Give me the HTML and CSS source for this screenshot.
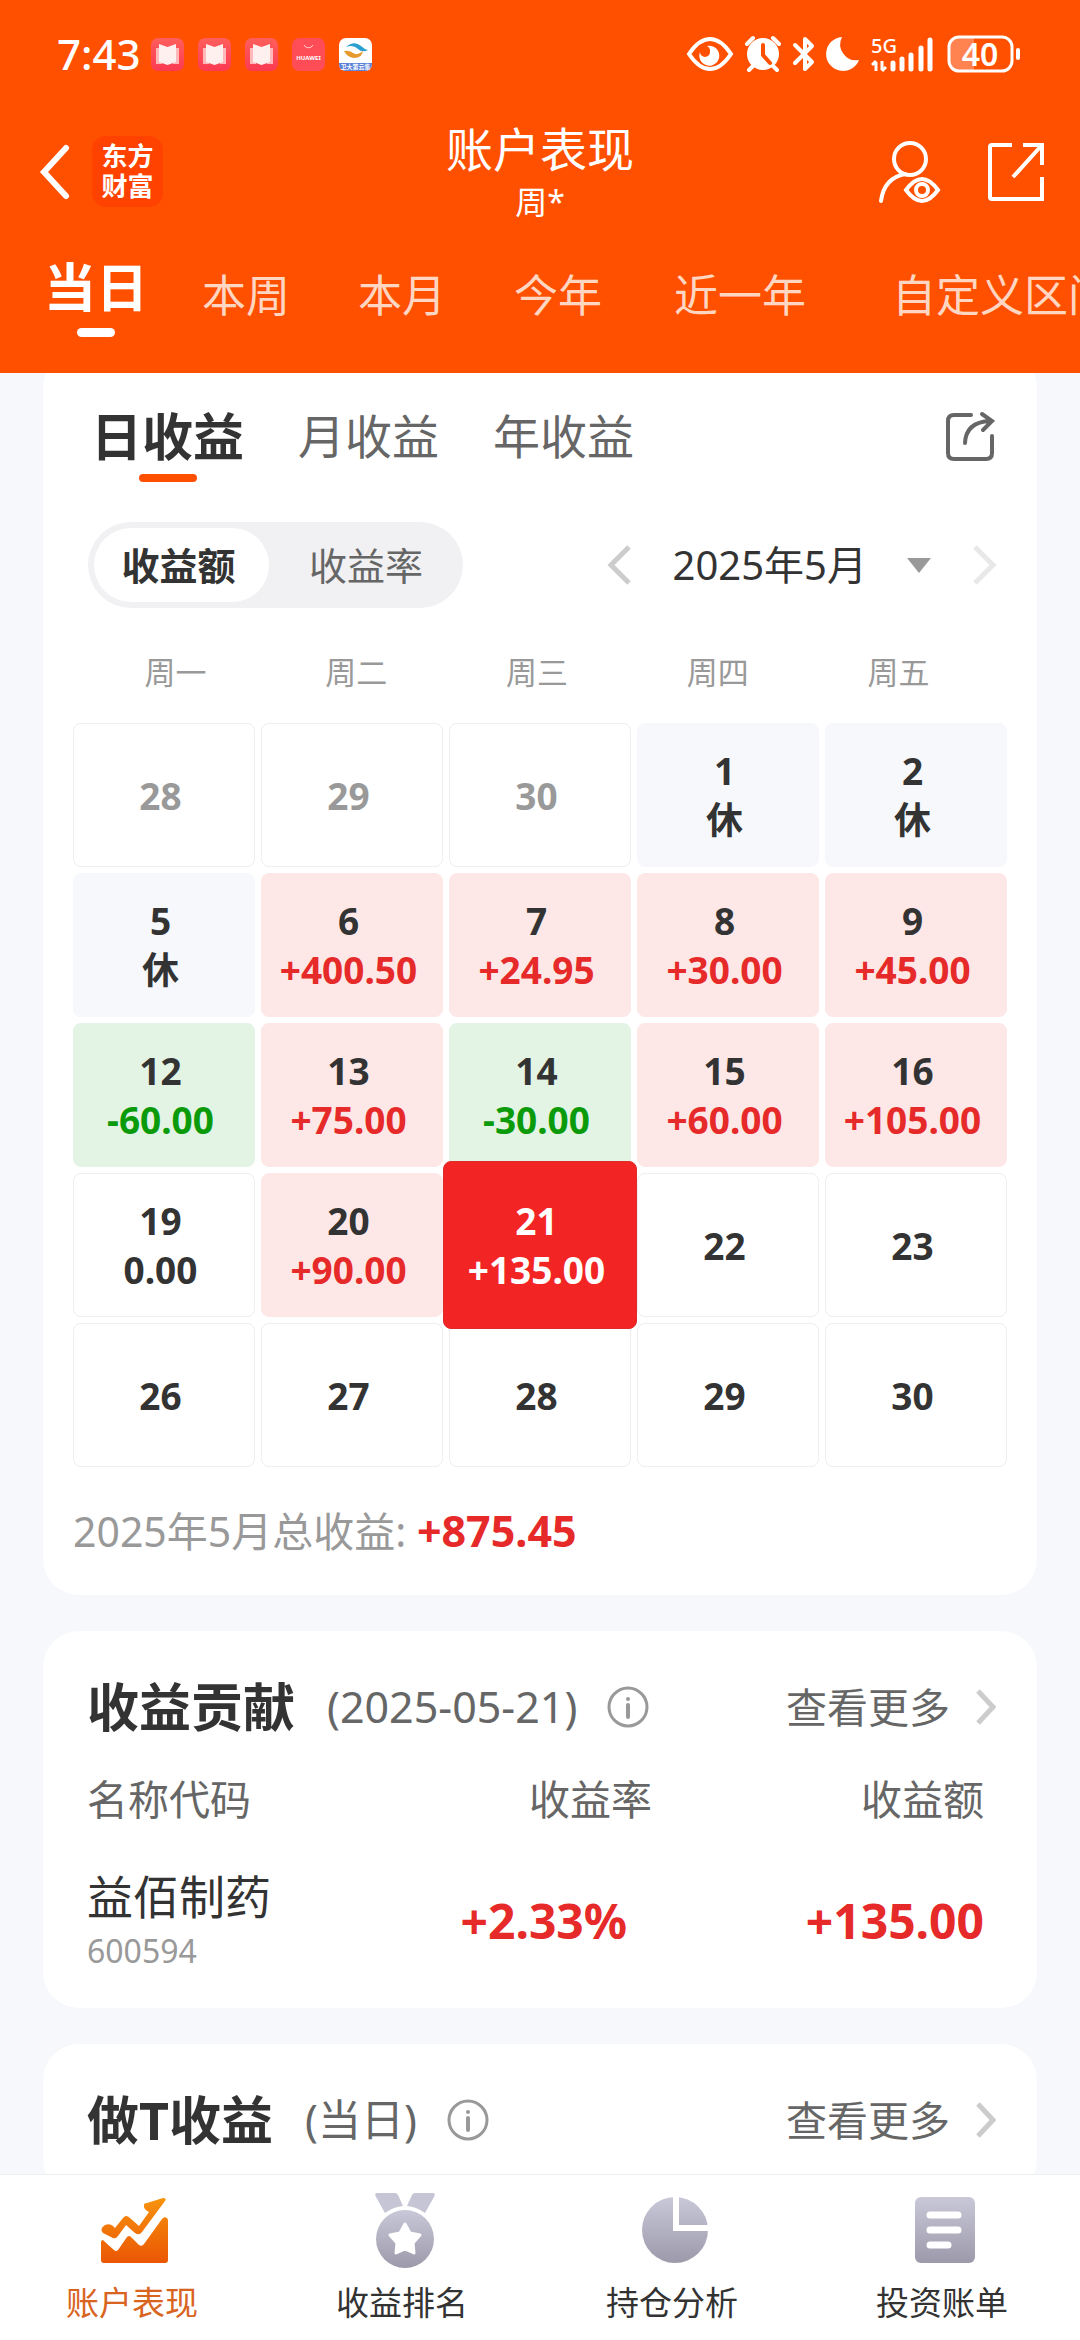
FILE: index.html
```html
<!DOCTYPE html>
<html lang="zh-CN">
<head>
<meta charset="utf-8">
<meta name="viewport" content="width=device-width, initial-scale=1">
<title>账户表现</title>
<link rel="stylesheet" href="styles.css">
</head>
<body>
<svg class="defs" aria-hidden="true">
  <defs>
    <linearGradient id="grey" x1="0" y1="0" x2="0" y2="1"><stop offset="0" stop-color="#c9c8d8"/><stop offset="1" stop-color="#9c9aaa"/></linearGradient>
    <linearGradient id="hot" gradientUnits="userSpaceOnUse" x1="0" y1="0" x2="0" y2="66"><stop offset="0" stop-color="#f8930c"/><stop offset="1" stop-color="#ea5504"/></linearGradient>
    <linearGradient id="pink" x1="0" y1="0" x2="0" y2="1"><stop offset="0" stop-color="#ff5f5c"/><stop offset="1" stop-color="#fb3a52"/></linearGradient>
    <symbol id="book" viewBox="0 0 33 33">
      <rect width="33" height="33" rx="7" fill="url(#pink)"/>
      <path d="M5 10h6v16H5zM22 10h6v16h-6z" fill="#ffb9bb"/>
      <path d="M8 6l8.500 3v18L8 24zM25 6l-8.500 3v18l8.500-3z" fill="#fff0f0"/>
    </symbol>
    <symbol id="info" viewBox="0 0 42 42">
      <circle cx="21" cy="21" r="19" fill="none" stroke="#999" stroke-width="3"/>
      <circle cx="21" cy="13" r="2" fill="#999"/>
      <path d="M21 19v12" stroke="#999" stroke-width="4" stroke-linecap="round"/>
    </symbol>
    <symbol id="more" viewBox="0 0 20 36"><path d="M2 2l15 16L2 34" fill="none" stroke="#ccc" stroke-width="5"/></symbol>
  </defs>
</svg>

<div class="app">
  <header class="top">
    <div class="status">
      <span class="clock">7:43</span>
      <div class="notices">
        <svg width="33" height="33"><use href="#book"/></svg>
        <svg width="33" height="33"><use href="#book"/></svg>
        <svg width="33" height="33"><use href="#book"/></svg>
        <svg width="33" height="33" viewBox="0 0 33 33">
          <rect width="33" height="33" rx="7" fill="#ff4d57"/>
          <path d="M12 7a5 5 0 0 0 9 0" fill="none" stroke="#ffd0d0" stroke-width="1"/>
          <text class="brand" x="16.500" y="22">HUAWEI</text>
        </svg>
        <svg width="33" height="33" viewBox="0 0 33 33">
          <rect width="33" height="33" rx="7" fill="#fff"/>
          <path d="M0 25h33v1a7 7 0 0 1-7 7H7a7 7 0 0 1-7-7z" fill="#5b82d8"/>
          <path d="M7 9q8-7 15-1 3 3 7 4-6 3-10-1-5-5-12-2z" fill="#2a9fd0"/>
          <path d="M5 13q5-1 9 2 5 3 10-2-1 7-9 7-7-1-10-7z" fill="#e59a2b"/>
          <text class="brand" x="16.500" y="31">卫大第云集</text>
        </svg>
      </div>
      <div class="signals">
        <svg width="46" height="34" viewBox="0 0 46 34"><path d="M2 17Q12 2 23 2t21 15Q34 32 23 32T2 17z" fill="none" stroke="#fff" stroke-width="4"/><path d="M20 9a10 10 0 1 1-7 6a5 5 0 0 0 10 0a6 6 0 0 0-3-6z" fill="#fff"/></svg>
        <svg width="36" height="36" viewBox="0 0 36 36"><circle cx="18" cy="18" r="16" fill="#fff"/><path d="M2 8l6-6M34 8l-6-6M4 34l4-4M32 34l-4-4" stroke="#fff" stroke-width="4" stroke-linecap="round"/><path d="M18 9v10l7 8" fill="none" stroke="#ff5000" stroke-width="4" stroke-linecap="round"/></svg>
        <svg width="22" height="36" viewBox="0 0 22 36"><path d="M2 9l17 17-7 7V3l7 7L2 27" fill="none" stroke="#fff" stroke-width="4" stroke-linejoin="round" stroke-linecap="round"/></svg>
        <svg width="32" height="36" viewBox="0 0 32 36"><path d="M15 1A17 17 0 1 0 32 24A16 16 0 0 1 15 1z" fill="#fff"/></svg>
        <svg width="64" height="36" viewBox="0 0 64 36">
          <text class="net" x="0" y="17">5G</text>
          <path d="M5 35V26M1 29l4-4M11 25v9M15 31l-4 4" stroke="#fff" stroke-width="3"/>
          <path d="M22 27v6M31 23v10M40 19v14M50 12v21M59 4v29" stroke="#fff" stroke-width="5" stroke-linecap="round"/>
        </svg>
        <svg width="74" height="38" viewBox="0 0 74 38">
          <path d="M11 2h16v34H11a9 9 0 0 1-9-9V11a9 9 0 0 1 9-9z" fill="#ff8350"/>
          <rect x="2" y="2" width="63" height="34" rx="10" fill="none" stroke="#fff" stroke-width="3"/>
          <path d="M71 15v8" stroke="#fff" stroke-width="4" stroke-linecap="round"/>
          <text class="charge" x="33" y="31">40</text>
        </svg>
      </div>
    </div>

    <div class="titlebar">
      <div class="left">
        <button class="plain" aria-label="返回"><svg width="35" height="54" viewBox="-5 0 35 54"><path d="M26 3L4 27l22 24" fill="none" stroke="#fff" stroke-width="6" stroke-linecap="round"/></svg></button>
        <span class="logo">东方<br>财富</span>
      </div>
      <div class="heading">
        <h1>账户表现</h1>
        <p>周*</p>
      </div>
      <div class="right">
        <button class="plain" aria-label="账户"><svg width="64" height="64" viewBox="0 0 64 64" fill="none" stroke="#fff" stroke-width="4"><circle cx="32" cy="19" r="16"/><path d="M3 61Q6 38 27 34" stroke-linecap="round"/><path d="M28 50q8-11 16-11t16 11q-8 11-16 11T28 50z"/><circle cx="44" cy="50" r="6"/></svg></button>
        <button class="plain" aria-label="分享"><svg width="58" height="60" viewBox="0 0 58 60" fill="none" stroke="#fff" stroke-width="4"><path d="M25 3H5q-2 0-2 2v50q0 2 2 2h50V35M36 3h19v20M55 3L26 35"/></svg></button>
      </div>
    </div>

    <nav class="ranges">
      <button class="plain on">当日</button>
      <button class="plain">本周</button>
      <button class="plain">本月</button>
      <button class="plain">今年</button>
      <button class="plain wide">近一年</button>
      <button class="plain widest">自定义区间</button>
    </nav>
  </header>

  <main>
    <section class="card calendar">
      <div class="kinds">
        <button class="plain on">日收益</button>
        <button class="plain">月收益</button>
        <button class="plain">年收益</button>
        <button class="plain share" aria-label="分享收益"><svg width="48" height="50" viewBox="0 0 48 50" fill="none" stroke="#666" stroke-width="4"><path d="M25 4H8Q2 4 2 10v32q0 6 6 6h32q6 0 6-6V25" stroke-linecap="round"/><path d="M19 32Q20 11 44 10M36 3l10 7-9 9" stroke-linecap="round"/></svg></button>
      </div>

      <div class="controls">
        <div class="switch">
          <button class="plain on">收益额</button>
          <button class="plain">收益率</button>
        </div>
        <div class="month">
          <button class="plain" aria-label="上个月"><svg width="24" height="40" viewBox="0 0 24 40"><path d="M22 2L4 20l18 18" fill="none" stroke="#ccc" stroke-width="5"/></svg></button>
          <button class="plain pick">2025年5月<svg width="24" height="15" viewBox="0 0 24 15"><path d="M0 0h24L12 15z" fill="#999"/></svg></button>
          <button class="plain" aria-label="下个月"><svg width="24" height="40" viewBox="0 0 24 40"><path d="M2 2l18 18L2 38" fill="none" stroke="#e8e8e8" stroke-width="5"/></svg></button>
        </div>
      </div>

      <div class="weekdays"><span>周一</span><span>周二</span><span>周三</span><span>周四</span><span>周五</span></div>
      <div class="days">
        <button class="day out">28</button>
        <button class="day out">29</button>
        <button class="day out">30</button>
        <button class="day rest">1<span>休</span></button>
        <button class="day rest">2<span>休</span></button>
        <button class="day rest">5<span>休</span></button>
        <button class="day gain">6<span>+400.50</span></button>
        <button class="day gain">7<span>+24.95</span></button>
        <button class="day gain">8<span>+30.00</span></button>
        <button class="day gain">9<span>+45.00</span></button>
        <button class="day loss">12<span>-60.00</span></button>
        <button class="day gain">13<span>+75.00</span></button>
        <button class="day loss">14<span>-30.00</span></button>
        <button class="day gain">15<span>+60.00</span></button>
        <button class="day gain">16<span>+105.00</span></button>
        <button class="day">19<span>0.00</span></button>
        <button class="day gain">20<span>+90.00</span></button>
        <button class="day today">21<span>+135.00</span></button>
        <button class="day">22</button>
        <button class="day">23</button>
        <button class="day">26</button>
        <button class="day">27</button>
        <button class="day">28</button>
        <button class="day">29</button>
        <button class="day">30</button>
      </div>
      <p class="total">2025年5月总收益: <strong>+875.45</strong></p>
    </section>

    <section class="card contribution">
      <div class="head">
        <h2>收益贡献</h2>
        <span class="when">(2025-05-21)</span>
        <button class="plain" aria-label="说明"><svg width="42" height="42"><use href="#info"/></svg></button>
        <a class="more" href="#contribution">查看更多<svg width="20" height="36"><use href="#more"/></svg></a>
      </div>
      <table class="stocks" id="contribution">
        <thead><tr><th class="name">名称代码</th><th class="rate">收益率</th><th>收益额</th></tr></thead>
        <tbody><tr><td class="name">益佰制药<small>600594</small></td><td class="rate">+2.33%</td><td>+135.00</td></tr></tbody>
      </table>
    </section>

    <section class="card">
      <div class="head" id="intraday">
        <h2>做T收益</h2>
        <span class="when">(当日)</span>
        <button class="plain" aria-label="说明"><svg width="42" height="42"><use href="#info"/></svg></button>
        <a class="more" href="#intraday">查看更多<svg width="20" height="36"><use href="#more"/></svg></a>
      </div>
    </section>
  </main>

  <nav class="tabbar">
    <a href="#performance" class="on">
      <svg width="68" height="76" viewBox="0 -5 68 76" fill="url(#hot)">
        <path d="M4 27q5-2 8 1l2 2 8-10q3-4 7 0l9 8 10-14q-6-3-5-7 0-2 3-2L62 0q4 0 2 3L41 34q-3 4-7 1l-9-8-8 11q-3 4-7 1L2 35q-4-4 2-8z"/>
        <path d="M0 44q1-4 4 0l9 8q2 2 4 0l9-13q2-2 4 0l8 8q3 2 5-1l18-25q2-3 5-1 1 1 1 3v39q0 3-3 3H3q-3 0-3-3z"/>
      </svg>
      <span>账户表现</span>
    </a>
    <a href="#ranking">
      <svg width="60" height="76" viewBox="0 0 60 76" fill="url(#grey)">
        <path d="M2 0h18q2 0 3 2l5 11q-10 1-18 7L1 4Q-1 0 2 0zM58 0H40q-2 0-3 2l-5 11q10 1 18 7L59 4q2-4-1-4z" fill="#c6c5d5"/>
        <circle cx="30" cy="46" r="29"/>
        <path d="M30 31l5 9 10 2-7 8 1 10-9-4-9 4 1-10-7-8 10-2z" fill="#fff" stroke="#fff" stroke-width="3" stroke-linejoin="round"/>
      </svg>
      <span>收益排名</span>
    </a>
    <a href="#positions">
      <svg width="68" height="76" viewBox="0 -4 68 76">
        <circle cx="34" cy="33" r="33" fill="url(#grey)"/>
        <path d="M35 -2v33h34" fill="none" stroke="#fff" stroke-width="6"/>
      </svg>
      <span>持仓分析</span>
    </a>
    <a href="#bills">
      <svg width="60" height="76" viewBox="0 -4 60 76">
        <rect width="60" height="66" rx="6" fill="url(#grey)"/>
        <path d="M15 18h28M15 33h28M15 48h18" stroke="#fff" stroke-width="7" stroke-linecap="round"/>
      </svg>
      <span>投资账单</span>
    </a>
  </nav>
</div>
</body>
</html>
```
FILE: styles.css
```css
* { box-sizing: border-box; margin: 0; padding: 0; }

body {
  font-family: "Noto Sans", "Noto Sans CJK SC", sans-serif;
  color: #333;
  background: #f6f8fb;
}

svg { display: block; flex: none; overflow: visible; }
.defs { position: absolute; width: 0; height: 0; }

.plain {
  border: 0;
  background: none;
  font: inherit;
  color: inherit;
  cursor: pointer;
  white-space: nowrap;
}

a { color: inherit; text-decoration: none; }

.app {
  height: 100vh;
  display: flex;
  flex-direction: column;
}

/* Header */
.top { flex: none; background: #ff5000; color: #fff; overflow: hidden; }

.status {
  height: 108px;
  padding: 0 59px 0 57px;
  display: flex;
  align-items: center;
}
.clock { font-size: 42px; font-weight: 500; line-height: 60px; width: 94px; white-space: nowrap; }
.notices { display: flex; gap: 14px; }
.signals { margin-left: auto; display: flex; align-items: center; gap: 12px; }
.brand { font-size: 6px; font-weight: 700; fill: #fff; text-anchor: middle; }
.net { font-size: 20px; font-weight: 500; fill: #fff; }
.charge { font-size: 32px; font-weight: 600; fill: #fff; text-anchor: middle; }

.titlebar {
  display: grid;
  grid-template-columns: 1fr auto 1fr;
  align-items: center;
  padding: 11px 35px 13px;
}
.left { display: flex; align-items: center; gap: 22px; }
.logo {
  width: 71px;
  height: 71px;
  border-radius: 14px;
  background: #ff4200;
  font-size: 26px;
  font-weight: 700;
  line-height: 30px;
  text-align: center;
  padding-top: 5px;
}
.heading { text-align: center; }
.heading h1 { font-size: 47px; font-weight: 400; line-height: 60px; }
.heading p { font-size: 32px; line-height: 45px; }
.right { display: flex; justify-content: flex-end; align-items: center; gap: 45px; }

.ranges {
  height: 136px;
  padding: 28px 0 0 24px;
  display: flex;
  align-items: flex-start;
  font-size: 44px;
  line-height: 60px;
  color: #ffd6c2;
}
.ranges button { flex: none; width: 156px; }
.ranges .wide { width: 208px; }
.ranges .widest { width: 316px; }
.ranges .on {
  width: 144px;
  margin-top: -8px;
  font-size: 52px;
  font-weight: 700;
  color: #fff;
}
.on::after { display: block; margin: 0 auto; }
.ranges .on::after {
  content: "";
  width: 38px;
  height: 9px;
  margin-top: 11px;
  border-radius: 5px;
  background: #fff;
}

/* Scrolling content */
main { flex: 1; min-height: 0; overflow: hidden auto; scrollbar-width: none; padding: 0 43px; }

.card {
  background: #fff;
  border-radius: 36px;
  padding: 46px 44px;
  margin-bottom: 36px;
}
.calendar { margin-top: -22px; padding: 56px 30px 38px; }
.contribution { padding-bottom: 32px; }

.kinds {
  display: flex;
  align-items: flex-start;
  gap: 54px;
  padding: 0 13px 0 18px;
  font-size: 47px;
  line-height: 58px;
  color: #666;
}
.kinds .on { font-size: 51px; font-weight: 700; color: #333; }
.kinds .on::after {
  content: "";
  width: 58px;
  height: 8px;
  margin-top: 9px;
  border-radius: 4px;
  background: #ff5000;
}
.share { margin-left: auto; padding-top: 4px; }

.controls {
  display: flex;
  justify-content: space-between;
  align-items: center;
  margin-top: 40px;
  padding: 0 10px 0 15px;
}
.switch {
  display: flex;
  width: 375px;
  padding: 6px;
  border-radius: 43px;
  background: #f1f1f3;
  font-size: 38px;
  line-height: 74px;
  color: #666;
}
.switch button { flex: 1; border-radius: 37px; padding-left: 6px; }
.switch .on { flex: none; width: 175px; padding: 0 6px 0 0; background: #fff; font-weight: 700; color: #333; }
.month { display: flex; align-items: center; gap: 42px; }
.pick { display: flex; align-items: center; gap: 40px; font-size: 40px; line-height: 60px; }

.weekdays {
  display: grid;
  grid-template-columns: repeat(5, 1fr);
  margin: 44px 18px 31px 12px;
  font-size: 31px;
  line-height: 40px;
  text-align: center;
  color: #999;
}

.days { display: grid; grid-template-columns: repeat(5, 1fr); grid-auto-rows: 144px; gap: 6px; }
.day {
  display: flex;
  flex-direction: column;
  align-items: center;
  justify-content: center;
  padding-right: 7px;
  border: 1px solid #eee;
  border-radius: 8px;
  background: #fff;
  font: 700 37px/49px "Noto Sans", "Noto Sans CJK SC", sans-serif;
  color: #333;
}
.out { color: #999; }
.rest { background: #f6f8fb; border-color: #f6f8fb; }
.gain { background: #fde8e7; border-color: #fde8e7; }
.gain span { color: #e62a2a; }
.loss { background: #e3f4e4; border-color: #e3f4e4; }
.loss span { color: #0a9a0a; }
.today {
  z-index: 1;
  margin: -12px -6px;
  background: #f32424;
  border-color: #e02a2a;
  color: #fff;
}

.total { margin-top: 39px; margin-bottom: 1px; font-size: 41px; line-height: 50px; color: #999; }
.total strong { font-size: 43px; color: #e62a2a; }

.head { display: flex; align-items: center; font-size: 41px; line-height: 60px; color: #666; }
.head h2 { font-size: 52px; font-weight: 700; color: #333; }
.when { margin: 0 30px 0 32px; font-size: 43px; }
.more { margin-left: auto; display: flex; align-items: center; gap: 26px; margin-right: -3px; }

.stocks {
  width: 100%;
  table-layout: fixed;
  margin-top: 37px;
  padding-right: 9px;
  border-spacing: 0;
  text-align: right;
  font-size: 48px;
  font-weight: 700;
}
.stocks th { font-size: 41px; font-weight: 400; line-height: 50px; color: #666; }
.stocks td { padding-top: 42px; line-height: 60px; color: #e62a2a; }
.stocks .name { width: 37%; text-align: left; }
.stocks td.name { font-size: 46px; font-weight: 400; color: #333; }
.stocks .rate { width: 26%; }
.stocks td.rate { padding-right: 25px; }
.stocks small { display: block; font-size: 32px; line-height: 50px; color: #999; }

/* Bottom navigation */
.tabbar {
  flex: none;
  display: grid;
  grid-template-columns: repeat(4, 1fr);
  padding: 18px 0 17px;
  border-top: 1px solid #eee;
  background: #fff;
  font-size: 33px;
  line-height: 40px;
}
.tabbar a { display: flex; flex-direction: column; align-items: center; gap: 14px; }
.tabbar span { padding-right: 6px; }
.tabbar .on { color: #d9641f; }
```
